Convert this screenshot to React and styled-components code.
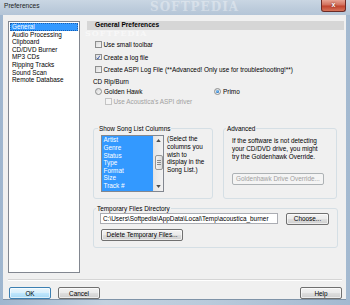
import React from "react";
import styled, { createGlobalStyle, css } from "styled-components";

const Global = createGlobalStyle`
  html, body { margin: 0; padding: 0; background: #fff; }
  body { font-family: "Liberation Sans", Arial, sans-serif; font-size: 6.4px; color: #000; }
  * { box-sizing: border-box; }
`;

const Window = styled.div`
  position: relative;
  width: 350px;
  height: 305px;
  display: flex;
  flex-direction: column;
  overflow: hidden;
  background: linear-gradient(90deg, #9fb6cf 0%, #c3d1df 30%, #b9cadb 60%, #a3b9d0 100%);
`;

const TitleBar = styled.div`
  height: 15px;
  flex: none;
  display: flex;
  align-items: flex-start;
  justify-content: space-between;
  padding: 0 4px 0 4px;
  background: linear-gradient(180deg, #c9d6e3 0%, #bccbdb 60%, #b4c5d7 100%);
`;

const Title = styled.div`
  font-size: 6.6px;
  line-height: 12px;
  color: #1b1b1b;
`;

const CloseButton = styled.div`
  width: 25px;
  height: 12px;
  border: 1px solid #6b2b26;
  border-top: none;
  border-radius: 0 0 3px 3px;
  background: linear-gradient(180deg, #e8a493 0%, #d2705c 45%, #c1442e 55%, #d6735a 100%);
  color: #fff;
  font-size: 7px;
  font-weight: bold;
  line-height: 10px;
  text-align: center;
  text-shadow: 0 0 2px #5a1a10;
`;

const Client = styled.div`
  flex: 1;
  margin: 0 4px 5px 3px;
  background: #f0f0f0;
  display: flex;
  flex-direction: column;
  border-bottom: 1px solid #7f93a8;
`;

const Main = styled.div`
  display: flex;
  gap: 7px;
  padding: 6px 2px 0 5px;
  height: 258px;
`;

const NavList = styled.ul`
  list-style: none;
  margin: 0;
  padding: 1px;
  width: 72px;
  height: 252px;
  background: #fff;
  border: 1px solid #828790;
`;

const NavItem = styled.li`
  height: 7.6px;
  line-height: 7.6px;
  padding-left: 2px;
  white-space: nowrap;
  ${(p) =>
    p.$selected &&
    css`
      background: #3399ff;
      color: #fff;
      outline: 1px dotted #1a5fb0;
      outline-offset: -1px;
    `}
`;

const Panel = styled.div`
  flex: 1;
  display: flex;
  flex-direction: column;
`;

const Header = styled.div`
  height: 8.5px;
  line-height: 8.5px;
  background: #d6d6d6;
  font-weight: bold;
  font-size: 6.6px;
  padding-left: 8px;
`;

const Row = styled.div`
  display: flex;
  align-items: center;
  height: 8px;
  margin-top: ${(p) => p.$mt || 0}px;
  padding-left: ${(p) => p.$pl || 8}px;
  color: ${(p) => (p.$disabled ? "#a0a0a0" : "#000")};
  white-space: nowrap;
`;

const Box = styled.span`
  flex: none;
  width: 6.5px;
  height: 6.5px;
  margin-right: 2px;
  border: 1px solid ${(p) => (p.$disabled ? "#c4c4c4" : "#8e8f8f")};
  background: ${(p) =>
    p.$disabled ? "#f4f4f4" : "linear-gradient(135deg, #dcdcdc 0%, #f6f6f6 100%)"};
  display: flex;
  align-items: center;
  justify-content: center;
`;

const Radio = styled.span`
  flex: none;
  width: 7px;
  height: 7px;
  margin-right: 2px;
  border-radius: 50%;
  border: 1px solid #8e8f8f;
  background: linear-gradient(135deg, #d8d8d8 0%, #f8f8f8 100%);
  display: flex;
  align-items: center;
  justify-content: center;
  &::after {
    content: "";
    display: ${(p) => (p.$on ? "block" : "none")};
    width: 3.5px;
    height: 3.5px;
    border-radius: 50%;
    background: radial-gradient(circle at 40% 35%, #8fd0ff 0%, #1b6fc2 70%, #0c4f9a 100%);
  }
`;

const RadioGroup = styled.div`
  display: flex;
  align-items: center;
  width: ${(p) => (p.$w ? `${p.$w}px` : "auto")};
`;

const Label = styled.div`
  height: 8px;
  line-height: 8px;
  margin-top: ${(p) => p.$mt || 0}px;
  padding-left: 6px;
`;

const GroupsRow = styled.div`
  display: flex;
  gap: 10px;
  margin-top: ${(p) => p.$mt}px;
  padding-left: 6px;
  height: ${(p) => p.$h}px;
`;

const Group = styled.fieldset`
  margin: 0;
  min-width: 0;
  width: ${(p) => p.$w}px;
  border: 1px solid #d5dfe5;
  border-radius: 3px;
  padding: ${(p) => p.$pad};
  & > legend {
    padding: 0 1px;
    margin-left: ${(p) => p.$lg}px;
    font-size: 6.4px;
    line-height: 7.4px;
  }
`;

const SongRow = styled.div`
  display: flex;
  gap: 3px;
`;

const SongList = styled.div`
  display: flex;
  width: 63px;
  height: 57px;
  border: 1px solid #828790;
  background: #fff;
  overflow: hidden;
`;

const SongItems = styled.div`
  flex: 1;
  background: #3399ff;
  color: #fff;
  padding-top: 0.5px;
`;

const SongItem = styled.div`
  height: 7.6px;
  line-height: 7.6px;
  padding-left: 1.5px;
`;

const ScrollBar = styled.div`
  width: 10px;
  display: flex;
  flex-direction: column;
  align-items: center;
  background: linear-gradient(90deg, #e6e6e6, #f2f2f2);
  border-left: 1px solid #e2e2e2;
`;

const Arrow = styled.div`
  height: 9px;
  display: flex;
  align-items: center;
  justify-content: center;
`;

const Thumb = styled.div`
  margin-top: 10px;
  width: 8px;
  height: 15px;
  border: 1px solid #979797;
  border-radius: 2px;
  background: linear-gradient(90deg, #f3f3f3, #dadada);
  display: flex;
  flex-direction: column;
  align-items: center;
  justify-content: center;
  gap: 1px;
  & > i {
    display: block;
    width: 4px;
    height: 1px;
    background: #8a8a8a;
  }
`;

const Spacer = styled.div`
  flex: 1;
`;

const Note = styled.div`
  line-height: 7.6px;
  padding-top: 0.5px;
`;

const Paragraph = styled.div`
  line-height: 8px;
  margin-bottom: ${(p) => p.$mb || 0}px;
`;

const Button = styled.div`
  flex: none;
  width: ${(p) => p.$w}px;
  height: ${(p) => p.$h || 12}px;
  margin-top: ${(p) => p.$mt || 0}px;
  margin-left: ${(p) => p.$ml || 0}px;
  border: 1px solid ${(p) => (p.$disabled ? "#adb2b5" : p.$default ? "#3c7fb1" : "#707070")};
  border-radius: 2px;
  display: flex;
  align-items: center;
  justify-content: center;
  white-space: nowrap;
  color: ${(p) => (p.$disabled ? "#a0a0a0" : "#000")};
  background: ${(p) =>
    p.$disabled
      ? "#f4f4f4"
      : p.$default
      ? "linear-gradient(180deg, #eaf6fd 0%, #d9f0fc 45%, #bee6fd 55%, #a7d9f5 100%)"
      : "linear-gradient(180deg, #f2f2f2 0%, #ebebeb 45%, #dddddd 55%, #cfcfcf 100%)"};
  box-shadow: inset 0 0 0 1px ${(p) => (p.$disabled ? "transparent" : "rgba(255,255,255,0.6)")};
`;

const PathRow = styled.div`
  display: flex;
  align-items: center;
  gap: 8px;
`;

const PathInput = styled.div`
  width: 178px;
  height: 11px;
  border: 1px solid #abadb3;
  background: #fff;
  line-height: 9px;
  padding-left: 2px;
  white-space: nowrap;
  overflow: hidden;
`;

const Separator = styled.div`
  margin: 6px 4px 0 5px;
  border-top: 1px solid #d5d5d5;
  border-bottom: 1px solid #fff;
`;

const ButtonBar = styled.div`
  display: flex;
  gap: 7px;
  padding: 6px 4px 0 6px;
`;

const Watermark = styled.div`
  position: absolute;
  left: ${(p) => p.$x}px;
  top: ${(p) => p.$y}px;
  font-family: "DejaVu Serif", serif;
  font-weight: bold;
  font-size: ${(p) => p.$size}px;
  line-height: 1;
  letter-spacing: 1px;
  color: rgba(255, 255, 255, ${(p) => p.$a});
  pointer-events: none;
  white-space: nowrap;
`;

const Check = () => (
  <svg width="5" height="5" viewBox="0 0 10 10">
    <path d="M1.5 5.5 L4 8.5 L8.5 1" fill="none" stroke="#2a4fa0" strokeWidth="2" />
  </svg>
);

const Up = ({ down }) => (
  <svg width="5" height="3" viewBox="0 0 6 4">
    <path d={down ? "M0 0 L6 0 L3 4 Z" : "M0 4 L6 4 L3 0 Z"} fill="#4d4d4d" />
  </svg>
);

const nav = [
  "General",
  "Audio Processing",
  "Clipboard",
  "CD/DVD Burner",
  "MP3 CDs",
  "Ripping Tracks",
  "Sound Scan",
  "Remote Database",
];

const cols = ["Artist", "Genre", "Status", "Type", "Format", "Size", "Track #"];

export default function App() {
  return (
    <>
      <Global />
      <Window>
        <TitleBar>
          <Title>Preferences</Title>
          <CloseButton>x</CloseButton>
        </TitleBar>
        <Client>
          <Main>
            <NavList>
              {nav.map((n, i) => (
                <NavItem key={n} $selected={i === 0}>
                  {n}
                </NavItem>
              ))}
            </NavList>
            <Panel>
              <Header>General Preferences</Header>
              <Row $mt={11}>
                <Box />
                Use small toolbar
              </Row>
              <Row $mt={4.5}>
                <Box>
                  <Check />
                </Box>
                Create a log file
              </Row>
              <Row $mt={4.5}>
                <Box />
                Create ASPI Log File (**Advanced! Only use for troubleshooting!**)
              </Row>
              <Label $mt={4}>CD Rip/Burn</Label>
              <Row $mt={2}>
                <RadioGroup $w={119}>
                  <Radio />
                  Golden Hawk
                </RadioGroup>
                <RadioGroup>
                  <Radio $on />
                  Primo
                </RadioGroup>
              </Row>
              <Row $mt={2} $pl={18} $disabled>
                <Box $disabled />
                Use Acoustica's ASPI driver
              </Row>
              <GroupsRow $mt={19} $h={74}>
                <Group $w={120} $pad="3px 4px 4px 7px" $lg={-3}>
                  <legend>Show Song List Columns</legend>
                  <SongRow>
                    <SongList>
                      <SongItems>
                        {cols.map((c) => (
                          <SongItem key={c}>{c}</SongItem>
                        ))}
                      </SongItems>
                      <ScrollBar>
                        <Arrow>
                          <Up />
                        </Arrow>
                        <Thumb>
                          <i />
                          <i />
                          <i />
                        </Thumb>
                        <Spacer />
                        <Arrow>
                          <Up down />
                        </Arrow>
                      </ScrollBar>
                    </SongList>
                    <Note>
                      (Select the
                      <br />
                      columns you
                      <br />
                      wish to
                      <br />
                      display in the
                      <br />
                      Song List.)
                    </Note>
                  </SongRow>
                </Group>
                <Group $w={114} $pad="5px 6px 4px 8px" $lg={-6}>
                  <legend>Advanced</legend>
                  <Paragraph $mb={12}>
                    If the software is not detecting
                    <br />
                    your CD/DVD drive, you might
                    <br />
                    try the Goldenhawk Override.
                  </Paragraph>
                  <Button $w={92} $disabled>
                    Goldenhawk Drive Override...
                  </Button>
                </Group>
              </GroupsRow>
              <GroupsRow $mt={6} $h={43}>
                <Group $w={245} $pad="1px 8px 3px 6px" $lg={-4}>
                  <legend>Temporary Files Directory</legend>
                  <PathRow>
                    <PathInput>C:\Users\Softpedia\AppData\Local\Temp\acoustica_burner</PathInput>
                    <Button $w={43}>Choose...</Button>
                  </PathRow>
                  <Button $w={82} $mt={4} $ml={1}>
                    Delete Temporary Files...
                  </Button>
                </Group>
              </GroupsRow>
            </Panel>
          </Main>
          <Separator />
          <ButtonBar>
            <Button $w={42} $default>
              OK
            </Button>
            <Button $w={42}>Cancel</Button>
            <Spacer />
            <Button $w={42}>Help</Button>
          </ButtonBar>
        </Client>
        <Watermark $x={150} $y={1} $size={12} $a={0.35}>
          SOFTPEDIA
        </Watermark>
        <Watermark $x={85} $y={29} $size={8} $a={0.55}>
          SOFTPEDIA
        </Watermark>
      </Window>
    </>
  );
}
